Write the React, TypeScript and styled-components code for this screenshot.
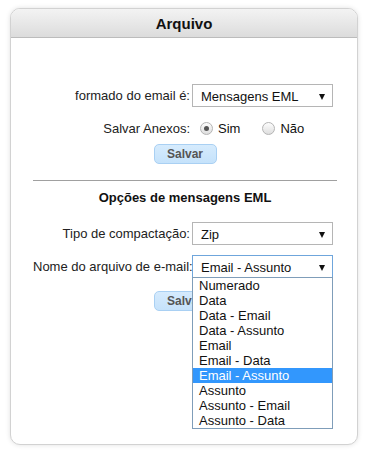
import React from "react";
import styled, { createGlobalStyle } from "styled-components";

const GlobalStyle = createGlobalStyle`
  body {
    margin: 0;
    background: #ffffff;
    font-family: "Liberation Sans", Arial, sans-serif;
    color: #111;
  }
`;

const Page = styled.div`
  padding: 8px 7px 10px 10px;
`;

const Card = styled.div`
  box-sizing: border-box;
  width: 348px;
  height: 437px;
  border: 1px solid #d2d2d2;
  border-radius: 10px;
  box-shadow: 0 0 5px rgba(0, 0, 0, 0.12);
  background: #fff;
`;

const Header = styled.div`
  height: 28px;
  display: flex;
  align-items: center;
  justify-content: center;
  border-bottom: 1px solid #bcbcbc;
  border-radius: 9px 9px 0 0;
  background: linear-gradient(#f3f3f3, #dcdcdc);
  font-size: 15px;
  font-weight: bold;
  color: #111;
`;

const Body = styled.div`
  padding: 46px 20px 0 22px;
`;

const Row = styled.div<{ $gap?: number }>`
  display: grid;
  grid-template-columns: 157px 141px;
  column-gap: 2px;
  align-items: center;
  margin-top: ${(p) => p.$gap ?? 0}px;
  font-size: 13px;
`;

const Label = styled.span`
  text-align: right;
  color: #222;
  white-space: nowrap;
`;

const SelectBox = styled.div<{ $focused?: boolean }>`
  position: relative;
  box-sizing: border-box;
  height: 23px;
  display: flex;
  align-items: center;
  justify-content: space-between;
  padding: 2px 7px 0 8px;
  border: 1px solid ${(p) => (p.$focused ? "#6fa6dc" : "#b5b5b5")};
  background: #fff;
  font-size: 13px;
  color: #111;
`;

const Arrow = styled.span`
  width: 0;
  height: 0;
  border-left: 3.5px solid transparent;
  border-right: 3.5px solid transparent;
  border-top: 6px solid #111;
`;

const Options = styled.ul`
  position: absolute;
  top: 100%;
  left: -1px;
  width: 141px;
  box-sizing: border-box;
  margin: 0;
  padding: 0;
  list-style: none;
  border: 1px solid #7f9db9;
  background: #fff;
  z-index: 2;
`;

const Option = styled.li<{ $active?: boolean }>`
  height: 15px;
  line-height: 15px;
  padding-left: 6px;
  font-size: 13px;
  color: ${(p) => (p.$active ? "#fff" : "#111")};
  background: ${(p) => (p.$active ? "#3297fd" : "transparent")};
`;

const Radios = styled.div`
  display: flex;
  align-items: center;
  padding-left: 8px;
  height: 22px;
`;

const RadioItem = styled.label`
  display: flex;
  align-items: center;
  gap: 5px;
  margin-right: 22px;
  color: #111;
`;

const RadioDot = styled.span<{ $checked?: boolean }>`
  box-sizing: border-box;
  width: 13px;
  height: 13px;
  border-radius: 50%;
  border: 1px solid #b4b4b4;
  background: linear-gradient(#fdfdfd, #dedede);
  display: flex;
  align-items: center;
  justify-content: center;

  &::after {
    content: "";
    width: 5px;
    height: 5px;
    border-radius: 50%;
    background: ${(p) => (p.$checked ? "#555" : "transparent")};
  }
`;

const ButtonRow = styled.div<{ $gap: number }>`
  display: flex;
  justify-content: center;
  margin-top: ${(p) => p.$gap}px;
`;

const Button = styled.button`
  box-sizing: border-box;
  width: 63px;
  height: 20px;
  padding: 0;
  border: 1px solid #a9d0f3;
  border-radius: 5px;
  background: linear-gradient(#d6ebfd, #c5e2fb);
  font-family: "Liberation Sans", Arial, sans-serif;
  font-size: 12px;
  font-weight: bold;
  color: #555;
`;

const Divider = styled.hr`
  margin: 16px 0 0;
  border: 0;
  border-top: 1px solid #a0a0a0;
`;

const Heading = styled.div`
  margin-top: 9px;
  text-align: center;
  font-size: 13px;
  font-weight: bold;
  color: #111;
  line-height: 16px;
`;

const names = [
  "Numerado",
  "Data",
  "Data - Email",
  "Data - Assunto",
  "Email",
  "Email - Data",
  "Email - Assunto",
  "Assunto",
  "Assunto - Email",
  "Assunto - Data",
];

export default function App() {
  return (
    <Page>
      <GlobalStyle />
      <Card>
        <Header>Arquivo</Header>
        <Body>
          <Row>
            <Label>formado do email é:</Label>
            <SelectBox>
              Mensagens EML
              <Arrow />
            </SelectBox>
          </Row>
          <Row $gap={10}>
            <Label>Salvar Anexos:</Label>
            <Radios>
              <RadioItem>
                <RadioDot $checked />
                Sim
              </RadioItem>
              <RadioItem>
                <RadioDot />
                Não
              </RadioItem>
            </Radios>
          </Row>
          <ButtonRow $gap={5}>
            <Button>Salvar</Button>
          </ButtonRow>
          <Divider />
          <Heading>Opções de mensagens EML</Heading>
          <Row $gap={16}>
            <Label>Tipo de compactação:</Label>
            <SelectBox>
              Zip
              <Arrow />
            </SelectBox>
          </Row>
          <Row $gap={10}>
            <Label>Nome do arquivo de e-mail:</Label>
            <SelectBox $focused>
              Email - Assunto
              <Arrow />
              <Options>
                {names.map((n) => (
                  <Option key={n} $active={n === "Email - Assunto"}>
                    {n}
                  </Option>
                ))}
              </Options>
            </SelectBox>
          </Row>
          <ButtonRow $gap={13}>
            <Button>Salvar</Button>
          </ButtonRow>
        </Body>
      </Card>
    </Page>
  );
}
